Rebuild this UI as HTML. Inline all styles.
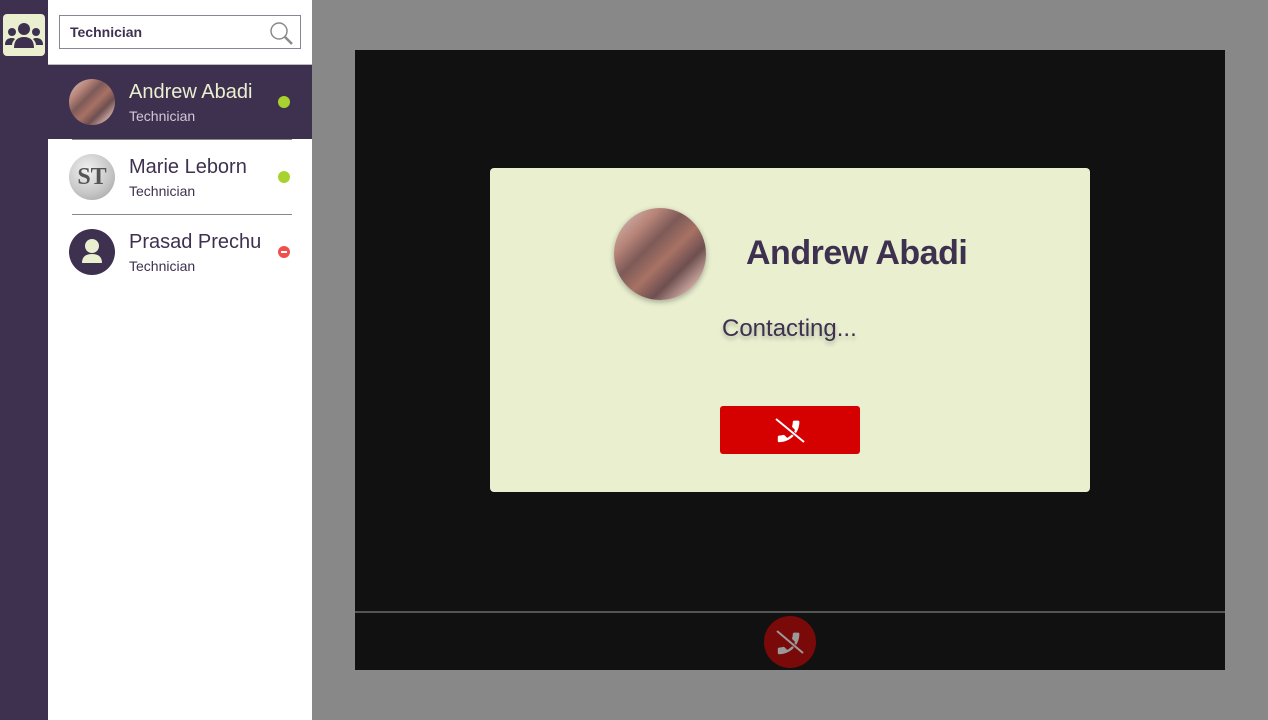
<!DOCTYPE html>
<html><head><style>
*{margin:0;padding:0;box-sizing:border-box}
body{width:1268px;height:720px;overflow:hidden;background:#888;font-family:"Liberation Sans",Roboto,sans-serif;position:relative}
.abs{position:absolute}
.grad{background:linear-gradient(135deg,#d8c6c2 0%,#b88478 25%,#7d5a58 40%,#a87264 55%,#6e4f50 70%,#c6a29a 85%,#e2d6d4 100%)}
.name{font-size:20px;color:#3e3150}
.sub{font-size:14px;color:#3e3150}
.dot{width:12px;height:12px;border-radius:50%;background:#a8d32e}
</style></head><body>
<div class="abs" style="left:0;top:0;width:48px;height:720px;background:#3e3150"></div>
<div class="abs" style="left:3px;top:14px;width:42px;height:42px;background:#e9efcf;border-radius:4px">
<svg width="42" height="42" viewBox="0 0 42 42"><g fill="#3e3150"><circle cx="21" cy="15" r="6"/><circle cx="9" cy="18" r="4"/><circle cx="33" cy="18" r="4"/><path d="M11 34 Q11 23 21 23 Q31 23 31 34Z"/><path d="M2 31 Q2 24 9 24 Q11 24 12 25 Q9 28 9 31Z"/><path d="M40 31 Q40 24 33 24 Q31 24 30 25 Q33 28 33 31Z"/></g></svg></div>
<div class="abs" style="left:48px;top:0;width:264px;height:720px;background:#fff"></div>
<div class="abs" style="left:59px;top:15px;width:242px;height:34px;border:1px solid #8a8494;background:#fff"></div>
<div class="abs" style="left:70px;top:24px;font-size:14px;font-weight:bold;color:#3e3150">Technician</div>
<svg class="abs" style="left:268px;top:20px" width="26" height="26" viewBox="0 0 26 26"><circle cx="11" cy="11" r="8" fill="none" stroke="#8a8a8a" stroke-width="1.5"/><path d="M17 17 L24 24" stroke="#8a8a8a" stroke-width="2.5"/></svg>
<div class="abs" style="left:48px;top:64px;width:264px;height:1px;background:#bbb"></div>
<div class="abs" style="left:48px;top:65px;width:264px;height:74px;background:#3e3150"></div>
<div class="abs grad" style="left:69px;top:79px;width:46px;height:46px;border-radius:50%"></div>
<div class="abs name" style="left:129px;top:81px;color:#ecefcf">Andrew Abadi</div>
<div class="abs sub" style="left:129px;top:108px;color:#cfc9d6">Technician</div>
<div class="abs dot" style="left:278px;top:96px"></div>
<div class="abs" style="left:72px;top:139px;width:220px;height:1px;background:#888"></div>
<div class="abs" style="left:69px;top:154px;width:46px;height:46px;border-radius:50%;background:radial-gradient(circle at 40% 35%,#f2f2f2,#c4c4c4 60%,#9a9a9a);overflow:hidden;font:bold 24px 'Liberation Serif',serif;color:#555;text-align:center;line-height:46px">ST</div>
<div class="abs name" style="left:129px;top:156px">Marie Leborn</div>
<div class="abs sub" style="left:129px;top:183px">Technician</div>
<div class="abs dot" style="left:278px;top:171px"></div>
<div class="abs" style="left:72px;top:214px;width:220px;height:1px;background:#888"></div>
<div class="abs" style="left:69px;top:229px;width:46px;height:46px;border-radius:50%;background:#3e3150"><svg width="46" height="46" viewBox="0 0 46 46"><circle cx="23" cy="17" r="7" fill="#e9efcf"/><path d="M13 34 Q13 25 23 25 Q33 25 33 34Z" fill="#e9efcf"/></svg></div>
<div class="abs name" style="left:129px;top:231px">Prasad Prechu</div>
<div class="abs sub" style="left:129px;top:258px">Technician</div>
<div class="abs dot" style="left:278px;top:246px;background:#f0504a"><div style="position:absolute;left:3px;top:5px;width:6px;height:2px;background:#fff"></div></div>

<div class="abs" style="left:355px;top:50px;width:870px;height:620px;background:#111"></div>
<div class="abs" style="left:355px;top:611px;width:870px;height:2px;background:#555"></div>
<div class="abs" style="left:764px;top:616px;width:52px;height:52px;border-radius:50%;background:#7a0a0a">
<svg width="52" height="52" viewBox="0 0 52 52"><g transform="translate(39,13) scale(-1.2,1.2)"><path d="M6.62 10.79c1.44 2.83 3.76 5.14 6.59 6.59l2.2-2.2c.27-.27.67-.36 1.02-.24 1.12.37 2.33.57 3.57.57.55 0 1 .45 1 1V20c0 .55-.45 1-1 1-9.39 0-17-7.61-17-17 0-.55.45-1 1-1h3.5c.55 0 1 .45 1 1 0 1.25.2 2.45.57 3.57.11.35.03.74-.25 1.02l-2.2 2.2z" fill="#999"/></g><path d="M13 15 L39 37" stroke="#7a0a0a" stroke-width="3.5"/><path d="M13 15 L39 37" stroke="#999" stroke-width="2"/></svg></div>

<div class="abs" style="left:490px;top:168px;width:600px;height:324px;background:#e9efcf;border-radius:4px"></div>
<div class="abs grad" style="left:614px;top:208px;width:92px;height:92px;border-radius:50%;box-shadow:0 2px 6px rgba(0,0,0,.3)"></div>
<div class="abs" style="left:746px;top:234px;font-size:34px;font-weight:bold;color:#3e3150;letter-spacing:-0.5px">Andrew Abadi</div>
<div class="abs" style="left:722px;top:315px;font-size:24px;color:#3e3150;text-shadow:0 3px 4px rgba(0,0,0,.25)">Contacting...</div>
<div class="abs" style="left:720px;top:406px;width:140px;height:48px;background:#d50000;border-radius:3px">
<svg width="140" height="48" viewBox="0 0 140 48"><g transform="translate(83,11) scale(-1.2,1.2)"><path d="M6.62 10.79c1.44 2.83 3.76 5.14 6.59 6.59l2.2-2.2c.27-.27.67-.36 1.02-.24 1.12.37 2.33.57 3.57.57.55 0 1 .45 1 1V20c0 .55-.45 1-1 1-9.39 0-17-7.61-17-17 0-.55.45-1 1-1h3.5c.55 0 1 .45 1 1 0 1.25.2 2.45.57 3.57.11.35.03.74-.25 1.02l-2.2 2.2z" fill="#fff"/></g><path d="M56 13 L84 36" stroke="#d50000" stroke-width="3.5"/><path d="M56 13 L84 36" stroke="#fff" stroke-width="2"/></svg></div>
</body></html>
